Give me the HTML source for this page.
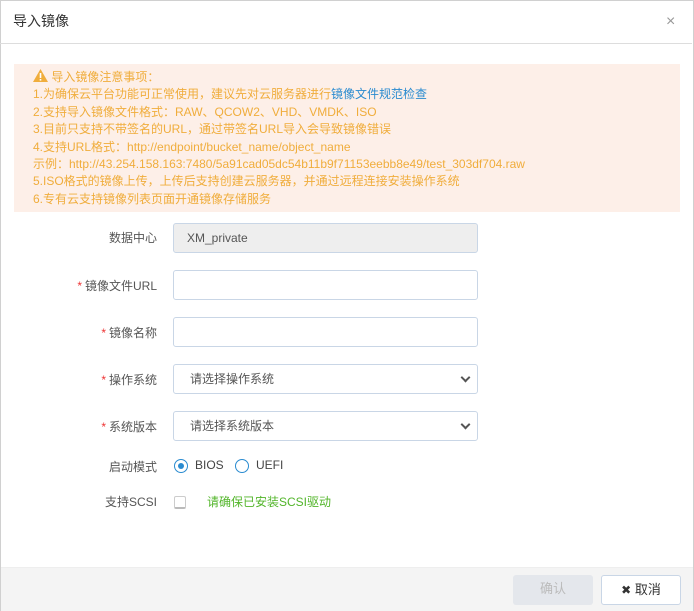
<!DOCTYPE html>
<html><head><meta charset="utf-8"><style>
*{box-sizing:border-box;margin:0;padding:0}
body{width:694px;height:611px;background:#fff;font-family:"Liberation Sans","Noto Sans CJK SC",sans-serif;font-size:12px;position:relative;overflow:hidden}
.dlg{position:absolute;left:0;top:0;width:694px;height:611px;border:1px solid #d0d0d0;border-bottom:none}
.hd{position:absolute;left:0;top:0;width:692px;height:44px;border-bottom:1px solid #ddd}
.hd .t{position:absolute;left:13px;top:11px;font-size:14px;color:#333}
.hd .x{position:absolute;left:666px;top:14px;font-size:16px;color:#999;line-height:16px}
.alert{position:absolute;left:14px;top:64px;width:666px;height:148px;background:#fdefe8;color:#f0ad3c;padding:5px 0 0 19px;line-height:17.4px}
.alert a{color:#2a8bd0;text-decoration:none}
.lbl{position:absolute;right:537px;color:#555;font-size:12px;white-space:nowrap}
.lbl b{color:#e33;font-weight:normal;margin-right:3px}
.inp{position:absolute;left:173px;width:305px;height:30px;border:1px solid #c9d6e6;border-radius:3px;background:#fff;padding:0 13px;line-height:28px;color:#555;font-size:12px}
.sel::after{content:"";position:absolute;right:8px;top:9px;width:5px;height:5px;border-right:2px solid #555;border-bottom:2px solid #555;transform:rotate(45deg)}
.ft{position:absolute;left:1px;top:567px;width:692px;height:44px;background:#f4f4f4;border-top:1px solid #eee}
.btn{position:absolute;top:575px;width:80px;height:30px;border-radius:3px;text-align:center;line-height:28px;font-size:13px}
</style></head><body>
<div class="dlg"></div>
<div class="hd"><div class="t">导入镜像</div><div class="x">×</div></div>
<div class="alert">
<div><svg width="15" height="13" viewBox="0 0 15 13" style="vertical-align:-1px"><path d="M7.5 0L15 13H0z" fill="#f0ad3c"/><rect x="6.7" y="4" width="1.6" height="5" fill="#fff"/><rect x="6.7" y="10" width="1.6" height="1.6" fill="#fff"/></svg> 导入镜像注意事项：</div>
<div>1.为确保云平台功能可正常使用，建议先对云服务器进行<a>镜像文件规范检查</a></div>
<div>2.支持导入镜像文件格式：RAW、QCOW2、VHD、VMDK、ISO</div>
<div>3.目前只支持不带签名的URL，通过带签名URL导入会导致镜像错误</div>
<div>4.支持URL格式：http://endpoint/bucket_name/object_name</div>
<div>示例：http://43.254.158.163:7480/5a91cad05dc54b11b9f71153eebb8e49/test_303df704.raw</div>
<div>5.ISO格式的镜像上传，上传后支持创建云服务器，并通过远程连接安装操作系统</div>
<div>6.专有云支持镜像列表页面开通镜像存储服务</div>
</div>
<div class="lbl" style="top:229px">数据中心</div>
<div class="inp" style="top:223px;background:#eee">XM_private</div>
<div class="lbl" style="top:277px"><b>*</b>镜像文件URL</div>
<div class="inp" style="top:270px"></div>
<div class="lbl" style="top:324px"><b>*</b>镜像名称</div>
<div class="inp" style="top:317px"></div>
<div class="lbl" style="top:371px"><b>*</b>操作系统</div>
<div class="inp sel" style="top:364px;padding-left:16px">请选择操作系统</div>
<div class="lbl" style="top:418px"><b>*</b>系统版本</div>
<div class="inp sel" style="top:411px;padding-left:16px">请选择系统版本</div>
<div class="lbl" style="top:458px">启动模式</div>
<div style="position:absolute;left:174px;top:459px;width:14px;height:14px;border:1px solid #2a8bd0;border-radius:50%"><div style="position:absolute;left:3px;top:3px;width:6px;height:6px;border-radius:50%;background:#2a8bd0"></div></div>
<div style="position:absolute;left:195px;top:458px;color:#444">BIOS</div>
<div style="position:absolute;left:235px;top:459px;width:14px;height:14px;border:1px solid #2a8bd0;border-radius:50%"></div>
<div style="position:absolute;left:256px;top:458px;color:#444">UEFI</div>
<div class="lbl" style="top:493px">支持SCSI</div>
<div style="position:absolute;left:174px;top:496px;width:12px;height:13px;border:1px solid #ccc;border-bottom:2px solid #bbb;border-radius:2px"></div>
<div style="position:absolute;left:207px;top:493px;color:#52b52a">请确保已安装SCSI驱动</div>
<div class="ft"></div>
<div class="btn" style="left:513px;background:#e4e7ec;color:#bbb">确认</div>
<div class="btn" style="left:601px;background:#fff;border:1px solid #c9d6e6;color:#333"><span style="font-size:12px">✖</span> 取消</div>
</body></html>
